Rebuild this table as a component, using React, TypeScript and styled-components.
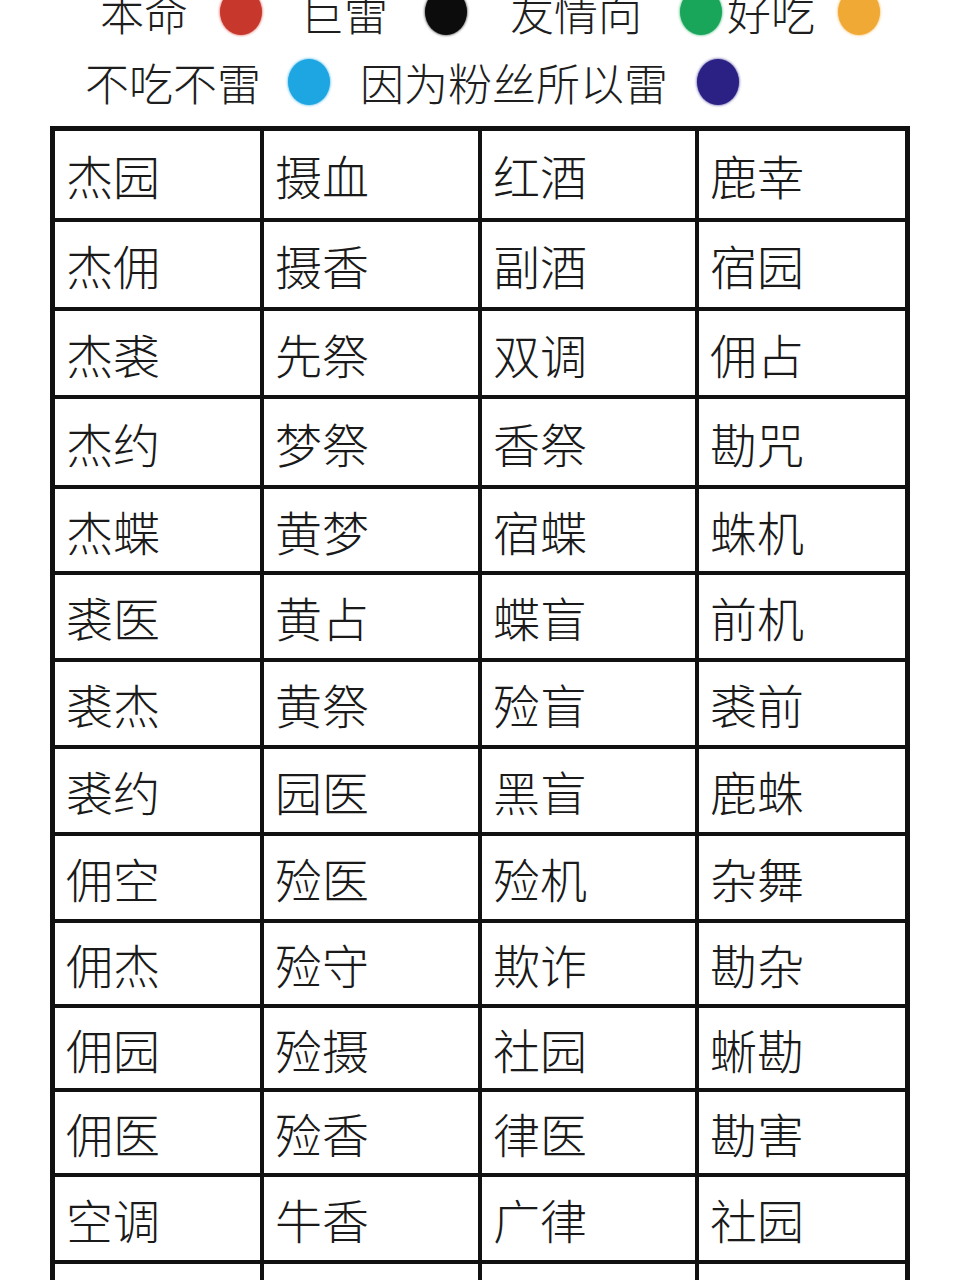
import React from 'react';
import styled, { createGlobalStyle } from 'styled-components';

const GlobalStyle = createGlobalStyle`
  html, body {
    margin: 0;
    padding: 0;
    background: #ffffff;
    overflow: hidden;
  }
  body {
    font-family: "Noto Sans CJK SC", "Noto Sans", sans-serif;
    color: #1c1c1c;
  }
`;

const Page = styled.div`
  width: 960px;
  height: 1280px;
  overflow: hidden;
  display: flex;
  flex-direction: column;
`;

const Legend = styled.div`
  display: flex;
  flex-direction: column;
  gap: 22px;
  margin-top: -12px;
`;

const LegendRow = styled.div<{ indent: number }>`
  display: flex;
  align-items: center;
  height: 48px;
  padding-left: ${p => p.indent}px;
`;

const LegendItem = styled.div<{ gap: number; after: number }>`
  display: flex;
  align-items: center;
  gap: ${p => p.gap}px;
  margin-right: ${p => p.after}px;
`;

const LegendLabel = styled.span`
  font-size: 44px;
  font-weight: 300;
  line-height: 48px;
  color: #1e1e1e;
  white-space: nowrap;
`;

const Dot = styled.span<{ color: string }>`
  display: inline-block;
  width: 42px;
  height: 46px;
  border-radius: 50%;
  background: ${p => p.color};
  box-shadow: 0 0 3px ${p => p.color};
  flex-shrink: 0;
`;

const rowHeights = [87, 85, 84, 86, 82, 83, 83, 83, 83, 81, 80, 81, 83, 83];

const Table = styled.div`
  margin: 20px 0 0 50px;
  display: grid;
  grid-template-columns: 205px 214px 213px 206px;
  grid-template-rows: ${rowHeights.map(h => `${h}px`).join(' ')};
  gap: 4px;
  width: max-content;
  background: #111111;
  border: 5px solid #111111;
`;

const Cell = styled.div`
  background: #ffffff;
  display: flex;
  align-items: center;
  padding-left: 11px;
  font-size: 47px;
  font-weight: 300;
  line-height: 1;
  color: #1a1a1a;
`;

const legend = [
  {
    indent: 100,
    items: [
      { label: '本命', color: '#c7372c', gap: 32, after: 38 },
      { label: '巨雷', color: '#0c0c0c', gap: 37, after: 43 },
      { label: '友情向', color: '#1aa65a', gap: 38, after: 5 },
      { label: '好吃', color: '#f0a934', gap: 23, after: 0 },
    ],
  },
  {
    indent: 85,
    items: [
      { label: '不吃不雷', color: '#1ea6e2', gap: 27, after: 30 },
      { label: '因为粉丝所以雷', color: '#2b2185', gap: 29, after: 0 },
    ],
  },
];

const rows = [
  ['杰园', '摄血', '红酒', '鹿幸'],
  ['杰佣', '摄香', '副酒', '宿园'],
  ['杰裘', '先祭', '双调', '佣占'],
  ['杰约', '梦祭', '香祭', '勘咒'],
  ['杰蝶', '黄梦', '宿蝶', '蛛机'],
  ['裘医', '黄占', '蝶盲', '前机'],
  ['裘杰', '黄祭', '殓盲', '裘前'],
  ['裘约', '园医', '黑盲', '鹿蛛'],
  ['佣空', '殓医', '殓机', '杂舞'],
  ['佣杰', '殓守', '欺诈', '勘杂'],
  ['佣园', '殓摄', '社园', '蜥勘'],
  ['佣医', '殓香', '律医', '勘害'],
  ['空调', '牛香', '广律', '社园'],
  ['', '', '', ''],
];

export default function App() {
  return (
    <>
      <GlobalStyle />
      <Page>
        <Legend>
          {legend.map((row, i) => (
            <LegendRow key={i} indent={row.indent}>
              {row.items.map(item => (
                <LegendItem key={item.label} gap={item.gap} after={item.after}>
                  <LegendLabel>{item.label}</LegendLabel>
                  <Dot color={item.color} />
                </LegendItem>
              ))}
            </LegendRow>
          ))}
        </Legend>
        <Table>
          {rows.map((row, r) =>
            row.map((text, c) => <Cell key={`${r}-${c}`}>{text}</Cell>)
          )}
        </Table>
      </Page>
    </>
  );
}
